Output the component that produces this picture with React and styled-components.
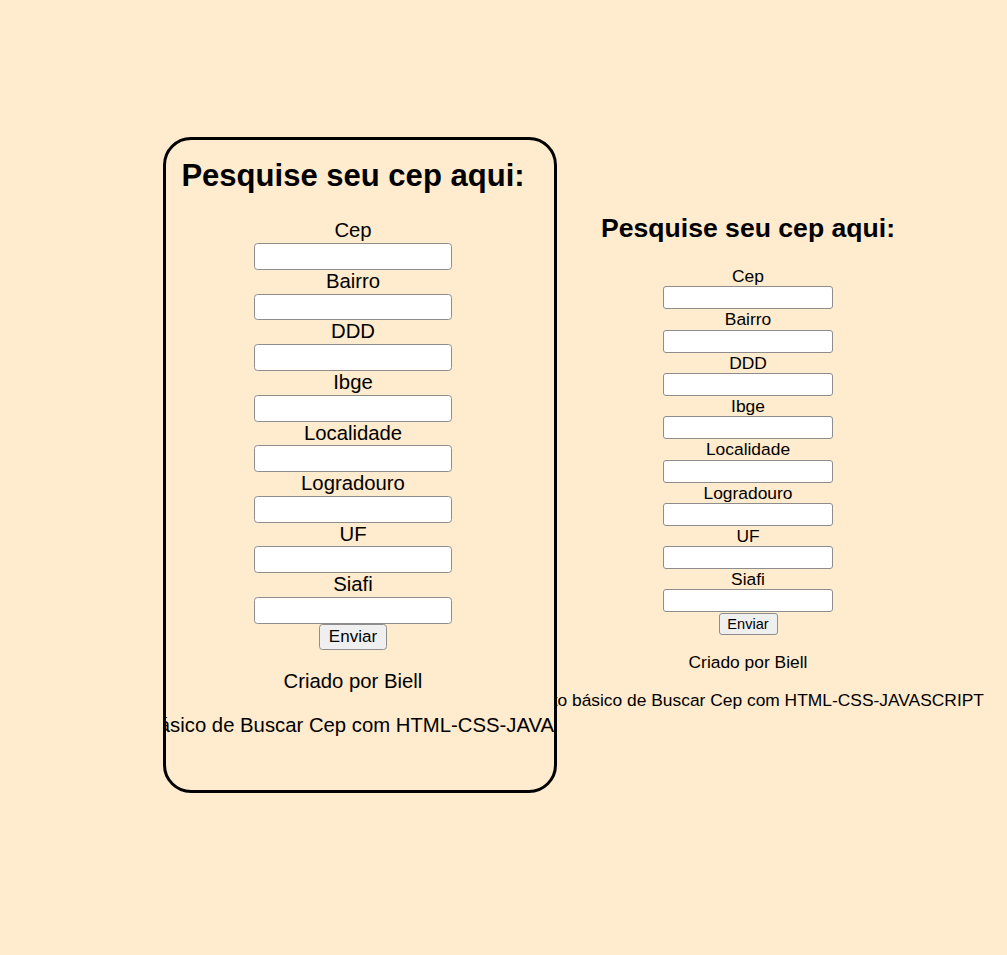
import React from 'react';
import styled, { createGlobalStyle } from "styled-components";

const fields = ["Cep", "Bairro", "DDD", "Ibge", "Localidade", "Logradouro", "UF", "Siafi"];

// scale helper, every size of the form is given for the plain (right) copy
const px = (n) => (p) => `${(n * p.$s).toFixed(2)}px`;

const GlobalStyle = createGlobalStyle`
  html, body {
    margin: 0;
    padding: 0;
    min-height: 100%;
    background-color: blanchedalmond;
  }
`;

const Page = styled.div`
  display: flex;
  align-items: flex-start;
  padding: 137px 0 0 163px;
  min-height: 955px;
  box-sizing: border-box;
  overflow: hidden;
`;

const Frame = styled.div`
  position: relative;
  z-index: 1;
  flex-shrink: 0;
  width: 394px;
  height: 656px;
  box-sizing: border-box;
  border: 3px solid #000;
  border-radius: 28px;
  background-color: blanchedalmond;
  overflow: hidden;
  padding: 17.5px 14px 0 0;
`;

const Side = styled.div`
  flex-shrink: 0;
  width: 382px;
  margin-top: 76px;
`;

const Panel = styled.div`
  display: flex;
  flex-direction: column;
  align-items: center;
  font-family: "Liberation Sans", Arial, sans-serif;
  color: #000;
`;

const Title = styled.h2`
  margin: 0 0 ${px(22.5)};
  font-size: ${px(26.6)};
  line-height: ${px(30.6)};
  font-weight: bold;
  white-space: nowrap;
`;

const Label = styled.label`
  display: block;
  font-size: ${px(17.4)};
  line-height: ${px(20.3)};
  white-space: nowrap;
`;

const Field = styled.input`
  display: block;
  width: ${px(170)};
  height: ${px(23)};
  box-sizing: border-box;
  margin: 0;
  padding: 0 ${px(3)};
  border: 1px solid #8d8d8d;
  border-radius: ${px(3)};
  background: #fff;
  font-size: ${px(14)};
`;

const Send = styled.button`
  display: block;
  width: ${px(59)};
  height: ${px(22)};
  box-sizing: border-box;
  margin: ${px(0.3)} 0 0;
  padding: 0;
  border: 1px solid #8d8d8d;
  border-radius: ${px(3)};
  background: #efefef;
  color: #000;
  font-family: "Liberation Sans", Arial, sans-serif;
  font-size: ${px(14.6)};
`;

const Note = styled.p`
  margin: ${px(17.7)} 0 0;
  font-size: ${px(17.4)};
  line-height: ${px(20)};
  white-space: nowrap;
`;

const CepForm = ({ s }) => (
  <Panel $s={s}>
    <Title $s={s}>Pesquise seu cep aqui:</Title>
    {fields.map((f) => (
      <React.Fragment key={f}>
        <Label $s={s}>{f}</Label>
        <Field $s={s} type="text" />
      </React.Fragment>
    ))}
    <Send $s={s}>Enviar</Send>
    <Note $s={s}>Criado por Biell</Note>
    <Note $s={s}>Projeto básico de Buscar Cep com HTML-CSS-JAVASCRIPT</Note>
  </Panel>
);

const App = () => {
  return (
    <>
      <GlobalStyle />
      <Page>
        <Frame>
          <CepForm s={1.167} />
        </Frame>
        <Side>
          <CepForm s={1} />
        </Side>
      </Page>
    </>
  );
};

export default App;
